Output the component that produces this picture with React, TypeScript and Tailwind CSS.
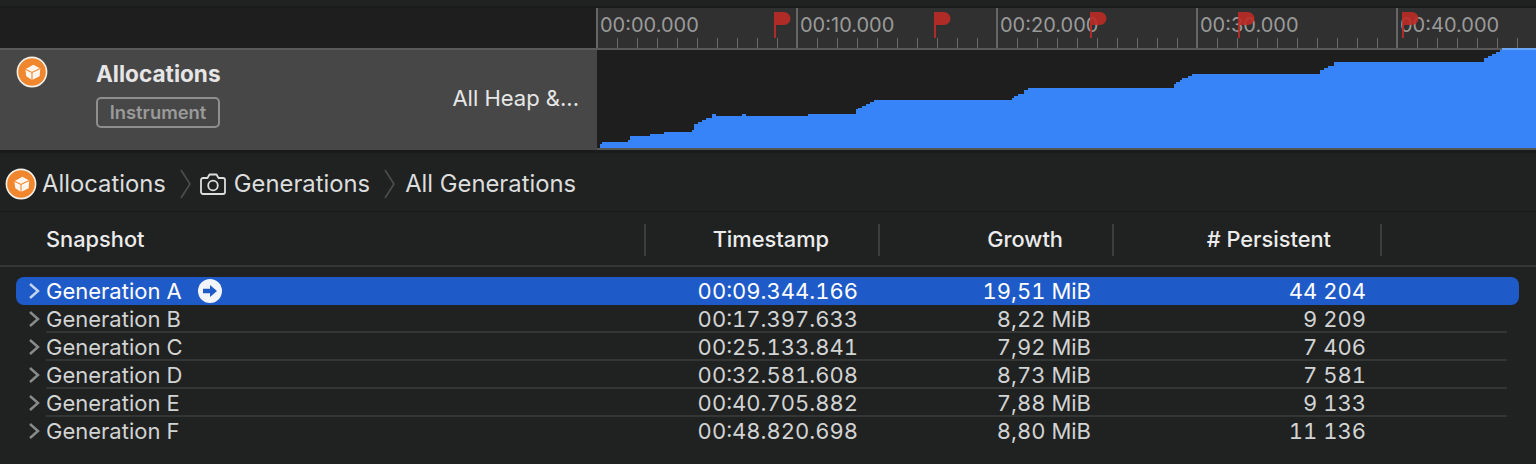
const ticks = [1, 2, 3, 4, 5, 6, 7, 8, 9];
const segments = ['00:00.000', '00:10.000', '00:20.000', '00:30.000', '00:40.000'];
const flags = [774, 934, 1090, 1238, 1402];

const chart: [number, number][] = [
  [600, 144], [602, 142], [628, 140], [630, 136], [650, 134], [664, 132], [692, 130], [694, 124], [698, 122],
  [702, 120], [706, 118], [712, 114], [716, 116], [742, 114], [746, 116], [808, 114], [856, 109], [858, 108],
  [862, 106], [866, 104], [870, 102], [874, 100], [1012, 98], [1014, 96], [1018, 94], [1024, 90], [1028, 88],
  [1174, 84], [1176, 82], [1180, 80], [1182, 78], [1188, 76], [1192, 74], [1320, 70], [1324, 68], [1328, 66],
  [1334, 62], [1484, 58], [1488, 56], [1492, 54], [1496, 52], [1500, 50],
];

const rows = [
  { name: 'Generation A', time: '00:09.344.166', growth: '19,51 MiB', count: '44 204' },
  { name: 'Generation B', time: '00:17.397.633', growth: '8,22 MiB', count: '9 209' },
  { name: 'Generation C', time: '00:25.133.841', growth: '7,92 MiB', count: '7 406' },
  { name: 'Generation D', time: '00:32.581.608', growth: '8,73 MiB', count: '7 581' },
  { name: 'Generation E', time: '00:40.705.882', growth: '7,88 MiB', count: '9 133' },
  { name: 'Generation F', time: '00:48.820.698', growth: '8,80 MiB', count: '11 136' },
];

// stepped area, y values are page pixels so subtract the track offset
const chartPath = () => {
  let d = 'M3 98';
  for (const [x, y] of chart) {
    d += ` H${x - 597} V${y - 50}`;
  }
  return `${d} H939 V98 Z`;
};

const CubeIcon = () => (
  <svg width="32" height="32" viewBox="0 0 32 32" className="shrink-0">
    <circle cx="16" cy="16" r="14.6" fill="#f0862e" stroke="#f4f0ea" strokeWidth="1.6" />
    <path d="M9.3 13.2 L17.4 8.8 L24.3 12.4 L23.6 20.3 L16 24 L10.3 20.3 Z" fill="#fdf6ee" />
    <path d="M9.3 13.2 L16 16.4 L24.3 12.4 M16 16.4 V24" fill="none" stroke="#f0862e" strokeWidth="1.1" />
  </svg>
);

const Crumb = () => (
  <svg width="14" height="30" viewBox="0 0 14 30" className="shrink-0">
    <path d="M2 1 L11 15 L2 29" fill="none" stroke="#4c4e4e" strokeWidth="1.6" />
  </svg>
);

const Row = ({ row, index }: { row: (typeof rows)[number]; index: number }) => {
  const selected = index === 0;
  const lined = index > 0 && index < 5;
  return (
    <div className={selected ? 'flex h-7 items-center rounded-lg bg-[#1f5bc8] leading-7 text-white' : 'flex h-7 items-center leading-7 text-[#d2d3d3]'}>
      <div className="flex w-[30px] justify-end pr-1.5">
        <svg width="12" height="18" viewBox="0 0 12 18">
          <path d="M2 2 L10 9 L2 16" fill="none" stroke={selected ? '#c4d4f0' : '#8a8b8b'} strokeWidth="2.4" />
        </svg>
      </div>
      <div className={lined ? 'grid h-full flex-1 grid-cols-[578px_234px_233px_275px_1fr] items-center shadow-[inset_0_-2px_0_#343636] mr-3' : 'grid h-full flex-1 grid-cols-[578px_234px_233px_275px_1fr] items-center mr-3'}>
        <div className="flex items-center gap-4">
          <span>{row.name}</span>
          {selected && (
            <svg width="24" height="24" viewBox="0 0 24 24">
              <circle cx="12" cy="12" r="12" fill="#f2f5fb" />
              <path d="M5 9.8 H12 V6 L19 12 L12 18 V14.2 H5 Z" fill="#1f5bc8" />
            </svg>
          )}
        </div>
        <div className="text-right tabular-nums">{row.time}</div>
        <div className="text-right tabular-nums">{row.growth}</div>
        <div className="text-right tabular-nums">{row.count}</div>
      </div>
    </div>
  );
};

export default function App() {
  return (
    <div className="h-[464px] w-[1536px] overflow-hidden bg-[#202222] font-['Inter',sans-serif] text-[22px]">
      <div className="h-1.5" />
      <div className="h-0.5 bg-[#1a1b1b]" />

      {/* ruler */}
      <div className="relative flex h-10 bg-[#1e1e1e]">
        <div className="w-[596px] shrink-0" />
        <div className="flex flex-1 overflow-hidden bg-[#303030]">
          {segments.map((label) => (
            <div key={label} className="flex w-[200px] shrink-0 flex-col border-l-2 border-[#666] text-[#9a9a9a]">
              <div className="h-[30px] pl-[2px] pt-[2px] text-[20px] leading-[30px]">{label}</div>
              <div className="flex h-2.5">
                {ticks.map((t) => (
                  <div key={t} className="w-5 border-r border-[#6a6a6a]" />
                ))}
              </div>
            </div>
          ))}
        </div>
        {flags.map((x) => (
          <svg key={x} width="18" height="28" viewBox="0 0 18 28" className="absolute top-1 opacity-90" style={{ left: x }}>
            <path d="M0 0 H10 A6.5 6.5 0 0 1 10 13 H2 V26 H0 Z" fill="#bd2c26" />
          </svg>
        ))}
      </div>
      <div className="flex h-0.5 justify-end bg-[#5a5a5a]">
        <div className="w-[34px] bg-[#6aa5fa]" />
      </div>

      {/* track */}
      <div className="flex h-[100px] bg-[#1e1e1e]">
        <div className="relative flex w-[597px] shrink-0 bg-[#474747] pt-1.5 text-[#e6e6e6]">
          <div className="ml-[16px] w-[80px] shrink-0">
            <CubeIcon />
          </div>
          <div className="flex flex-col items-start">
            <div className="text-[22.6px] leading-[36px] font-bold">Allocations</div>
            <div className="mt-[5px] flex h-[31px] w-[124px] items-center justify-center rounded-[5px] border-2 border-[#8e8e8e] text-[18.4px] font-semibold text-[#9a9a9a]">
              Instrument
            </div>
          </div>
          <div className="absolute right-[18px] top-[32px] leading-8">All Heap &amp;...</div>
        </div>
        <svg width="939" height="100" viewBox="0 0 939 100" className="shrink-0">
          <path d={chartPath()} fill="#3784f8" />
          <rect x="0" y="98" width="939" height="2" fill="#555" />
        </svg>
      </div>
      <div className="h-[3px] bg-[#1a1b1b]" />

      {/* breadcrumb */}
      <div className="flex h-[59px] items-center border-b border-[#181919] pl-[5px] pt-1 text-[23.8px] text-[#dcdddd]">
        <CubeIcon />
        <span className="ml-[5px]">Allocations</span>
        <div className="ml-[13px]"><Crumb /></div>
        <svg width="26" height="24" viewBox="0 0 26 24" className="ml-[7px] shrink-0">
          <path d="M3 6 H7.5 L9.5 2.5 H16.5 L18.5 6 H23 A2 2 0 0 1 25 8 V20 A2 2 0 0 1 23 22 H3 A2 2 0 0 1 1 20 V8 A2 2 0 0 1 3 6 Z" fill="none" stroke="#dcdddd" strokeWidth="1.8" strokeLinejoin="round" />
          <circle cx="13" cy="13.5" r="4.8" fill="none" stroke="#dcdddd" strokeWidth="1.8" />
        </svg>
        <span className="ml-2">Generations</span>
        <div className="ml-[13px]"><Crumb /></div>
        <span className="ml-2">All Generations</span>
      </div>

      {/* table header */}
      <div className="grid h-[55px] grid-cols-[644px_234px_234px_268px_1fr] items-center border-b-2 border-[#343636] pt-0.5 text-[21.8px] font-medium text-[#ececec]">
        <div className="pl-[46px]">Snapshot</div>
        <div className="flex h-8 items-center justify-end border-l-2 border-[#3c3e3e] pr-[49px]">Timestamp</div>
        <div className="flex h-8 items-center justify-end border-l-2 border-[#3c3e3e] pr-[49px]">Growth</div>
        <div className="flex h-8 items-center justify-end border-l-2 border-[#3c3e3e] pr-[49px]">
          # Persistent
        </div>
        <div className="h-8 border-l-2 border-[#3c3e3e]" />
      </div>

      {/* rows */}
      <div className="ml-4 mr-[17px] mt-2.5">
        {rows.map((row, i) => (
          <Row key={row.name} row={row} index={i} />
        ))}
      </div>
    </div>
  );
}
